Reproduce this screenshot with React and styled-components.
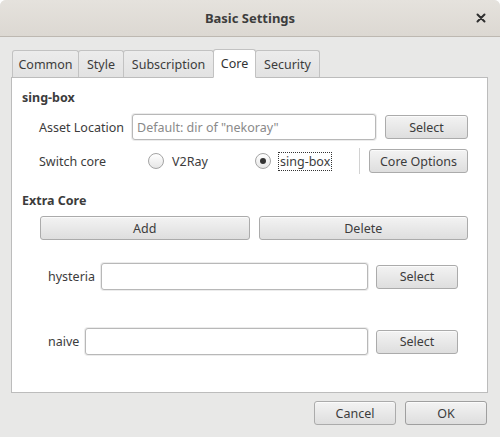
import React from 'react';
import styled, { createGlobalStyle } from 'styled-components';

const GlobalStyle = createGlobalStyle`
  html, body {
    margin: 0;
    padding: 0;
    background: #ffffff;
  }
  body {
    font-family: "Noto Sans", "Open Sans", sans-serif;
    font-size: 12.5px;
    color: #3c3c3c;
  }
`;

const Window = styled.div`
  width: 500px;
  height: 437px;
  background: #e8e8e7;
  border-radius: 6px 6px 0 0;
  overflow: hidden;
  display: flex;
  flex-direction: column;
`;

const TitleBar = styled.div`
  position: relative;
  height: 36px;
  flex: none;
  display: flex;
  align-items: center;
  justify-content: center;
  background: linear-gradient(#e5e2dd, #dcd8d2);
  border-bottom: 1px solid #bdb8b1;
  font-weight: bold;
  font-size: 13px;
  color: #3d3d3d;
`;

const CloseButton = styled.span`
  position: absolute;
  right: 14px;
  top: 13px;
  width: 10px;
  height: 10px;
  display: flex;
  align-items: center;
  justify-content: center;
`;

const Body = styled.div`
  padding: 11px 12px 0 11px;
  display: flex;
  flex-direction: column;
`;

const TabBar = styled.div`
  display: flex;
  align-items: flex-end;
  height: 29px;
  padding-left: 2px;
  position: relative;
  z-index: 1;
`;

const Tab = styled.div`
  width: ${({ $w }) => $w}px;
  height: ${({ $active }) => ($active ? '29px' : '27px')};
  box-sizing: border-box;
  display: flex;
  align-items: center;
  justify-content: center;
  white-space: nowrap;
  background: ${({ $active }) => ($active ? '#ffffff' : 'linear-gradient(#ececec, #e2e2e2)')};
  border: 1px solid #c2c2c2;
  border-bottom: ${({ $active }) => ($active ? '1px solid #ffffff' : 'none')};
  border-radius: 3px 3px 0 0;
  margin-left: -1px;
  margin-bottom: ${({ $active }) => ($active ? '-1px' : '0')};
  color: ${({ $active }) => ($active ? '#333' : '#3c3c3c')};
  position: relative;
  z-index: ${({ $active }) => ($active ? 2 : 1)};
`;

const Panel = styled.div`
  height: 316px;
  box-sizing: border-box;
  background: #ffffff;
  border: 1px solid #bcbcbc;
  padding: 10px 19px 0 10px;
  display: flex;
  flex-direction: column;
`;

const Heading = styled.div`
  font-weight: bold;
  height: 20px;
  line-height: 20px;
  margin-top: ${({ $top }) => $top}px;
`;

const Row = styled.div`
  display: flex;
  align-items: center;
  height: ${({ $h }) => $h || 26}px;
  margin-top: ${({ $top }) => $top || 0}px;
  padding-left: ${({ $left }) => $left || 0}px;
  gap: ${({ $gap }) => ($gap === undefined ? 9 : $gap)}px;
`;

const Label = styled.span`
  width: ${({ $w }) => ($w ? `${$w}px` : 'auto')};
  flex: none;
  white-space: nowrap;
`;

const CoreLabel = styled(Label)`
  margin-right: -2px;
`;

const Input = styled.input`
  flex: ${({ $w }) => ($w ? 'none' : 1)};
  min-width: 0;
  width: ${({ $w }) => ($w ? `${$w}px` : 'auto')};
  height: ${({ $h }) => $h || 26}px;
  box-sizing: border-box;
  border: 1px solid #b8b8b8;
  border-radius: 3px;
  box-shadow: 0 0 0 1px #ececec;
  background: #ffffff;
  font: inherit;
  color: #3c3c3c;
  padding: 0 4px;
  outline: none;
  &::placeholder {
    color: #8a8a8a;
  }
`;

const Button = styled.button`
  flex: none;
  width: ${({ $w }) => ($w ? `${$w}px` : 'auto')};
  height: 24px;
  box-sizing: border-box;
  border: 1px solid ${({ $default }) => ($default ? '#9f9f9f' : '#ababab')};
  border-radius: 3px;
  background: linear-gradient(#f3f3f3, #dedede);
  box-shadow: inset 0 1px 0 #fbfbfb;
  font: inherit;
  color: #3c3c3c;
  padding: 0;
  cursor: pointer;
`;

const WideButton = styled(Button)`
  flex: 1;
`;

const RadioOption = styled.label`
  display: flex;
  align-items: center;
  gap: 8px;
  width: ${({ $w }) => $w}px;
  flex: none;
`;

const RadioCircle = styled.span`
  width: 16px;
  height: 16px;
  flex: none;
  box-sizing: border-box;
  border-radius: 50%;
  border: 1px solid #a4a4a4;
  background: linear-gradient(#ffffff, #e6e6e6);
  display: flex;
  align-items: center;
  justify-content: center;
  &::after {
    content: '';
    width: 6px;
    height: 6px;
    border-radius: 50%;
    background: ${({ $checked }) => ($checked ? '#333333' : 'transparent')};
  }
`;

const FocusText = styled.span`
  outline: 1px dotted #333;
  outline-offset: 0;
  padding: 0 1px;
  line-height: 17px;
`;

const Separator = styled.span`
  width: 1px;
  height: 26px;
  flex: none;
  background: #d2d2d2;
  margin-right: 9px;
`;

const ExtraList = styled.div`
  display: flex;
  flex-direction: column;
  padding-left: 26px;
  padding-right: 10px;
`;

const Footer = styled.div`
  display: flex;
  justify-content: flex-end;
  gap: 9px;
  margin-top: 8px;
  padding-right: 1px;
`;

const CloseIcon = () => (
  <svg width="10" height="10" viewBox="0 0 10 10">
    <path d="M1.5 1.5 L8.5 8.5 M8.5 1.5 L1.5 8.5" stroke="#2f2f2f" strokeWidth="2" strokeLinecap="round" />
  </svg>
);

const tabs = [
  { name: 'Common', w: 67 },
  { name: 'Style', w: 46 },
  { name: 'Subscription', w: 91 },
  { name: 'Core', w: 43, active: true },
  { name: 'Security', w: 65 },
];

const extraCores = [
  { name: 'hysteria', top: 23 },
  { name: 'naive', top: 38 },
];

export default function App() {
  return (
    <>
      <GlobalStyle />
      <Window>
        <TitleBar>
          Basic Settings
          <CloseButton>
            <CloseIcon />
          </CloseButton>
        </TitleBar>
        <Body>
          <TabBar>
            {tabs.map((t) => (
              <Tab key={t.name} $active={t.active} $w={t.w}>
                {t.name}
              </Tab>
            ))}
          </TabBar>
          <Panel>
            <Heading $top={0}>sing-box</Heading>
            <Row $top={6} $left={17} $gap={0}>
              <Label $w={93}>Asset Location</Label>
              <Input $w={244} placeholder='Default: dir of "nekoray"' />
              <span style={{ width: 9 }} />
              <Button $w={83}>Select</Button>
            </Row>
            <Row $top={8} $left={17} $gap={0}>
              <Label $w={109}>Switch core</Label>
              <RadioOption $w={107}>
                <RadioCircle />
                <span>V2Ray</span>
              </RadioOption>
              <RadioOption $w={104}>
                <RadioCircle $checked />
                <FocusText>sing-box</FocusText>
              </RadioOption>
              <Separator />
              <Button $w={99}>Core Options</Button>
            </Row>
            <Heading $top={17}>Extra Core</Heading>
            <Row $top={5} $left={18} $h={24}>
              <WideButton>Add</WideButton>
              <WideButton>Delete</WideButton>
            </Row>
            <ExtraList>
              {extraCores.map((c) => (
                <Row key={c.name} $top={c.top} $h={27} $gap={8}>
                  <CoreLabel>{c.name}</CoreLabel>
                  <Input $h={27} />
                  <Button $w={82}>Select</Button>
                </Row>
              ))}
            </ExtraList>
          </Panel>
          <Footer>
            <Button $w={82}>Cancel</Button>
            <Button $w={82} $default>
              OK
            </Button>
          </Footer>
        </Body>
      </Window>
    </>
  );
}
